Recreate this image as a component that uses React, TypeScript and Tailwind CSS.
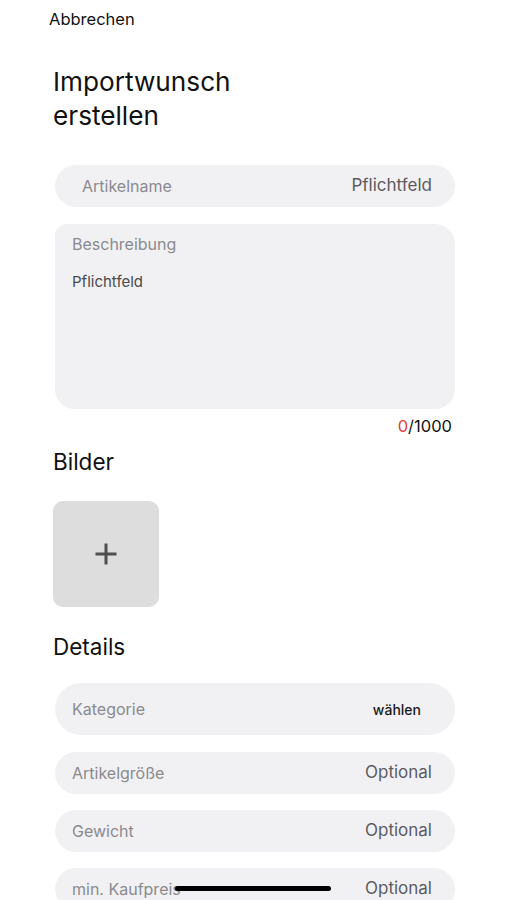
export default function App() {
  const rows = [
    { label: "Artikelgröße", value: "Optional" },
    { label: "Gewicht", value: "Optional" },
    { label: "min. Kaufpreis", value: "Optional" },
  ];

  return (
    <div
      className="relative h-[900px] w-[507px] overflow-hidden bg-white text-[#111]"
      style={{ fontFamily: "Inter, 'Noto Sans', sans-serif" }}
    >
      <div className="pl-[49px] pt-[9px] text-[16.5px] leading-5">Abbrechen</div>

      <div className="flex flex-col pl-[53px]">
        <h1 className="mt-[36px] text-[26.2px] leading-[34px]">
          Importwunsch
          <br />
          erstellen
        </h1>

        <div className="ml-[2px] mt-[32px] flex h-[42px] w-[400px] items-center justify-between rounded-full bg-[#f1f1f3] pl-[27px] pr-[23px]">
          <span className="text-[16px] text-[#8a8a8e]">Artikelname</span>
          <span className="text-[17px] text-[#5b5b5f]">Pflichtfeld</span>
        </div>

        <div className="ml-[2px] mt-[17px] h-[185px] w-[400px] rounded-[20px] rounded-tl-[12px] bg-[#f1f1f3] px-[17px] pt-[10px]">
          <div className="text-[16px] leading-5 text-[#8a8a8e]">Beschreibung</div>
          <div className="mt-[18px] text-[15px] leading-5 text-[#4a4a4c]">Pflichtfeld</div>
        </div>

        <div className="mt-[7px] w-[399px] text-right text-[16.5px] leading-5">
          <span className="text-[#e0403a]">0</span>/1000
        </div>

        <h2 className="mt-[12px] text-[22.5px] leading-[28px]">Bilder</h2>

        <button className="mt-[25px] flex h-[106px] w-[106px] items-center justify-center rounded-[10px] bg-[#dddddd]">
          <svg width="24" height="24" viewBox="0 0 24 24" fill="none" stroke="#4f4f4f" strokeWidth="3">
            <path d="M12 1.5v21M1.5 12h21" />
          </svg>
        </button>

        <h2 className="mt-[26px] text-[22.5px] leading-[28px]">Details</h2>

        <div className="ml-[2px] mt-[22px] flex h-[52px] w-[400px] items-center justify-between rounded-full bg-[#f1f1f3] pl-[17px] pr-[34px]">
          <span className="text-[16px] text-[#8a8a8e]">Kategorie</span>
          <span className="text-[14px] font-medium text-[#1a1a1a]">wählen</span>
        </div>

        <div className="ml-[2px] mt-[17px] flex w-[400px] flex-col gap-[16px]">
          {rows.map((r) => (
            <div
              key={r.label}
              className="flex h-[42px] items-center justify-between rounded-full bg-[#f1f1f3] pl-[17px] pr-[23px]"
            >
              <span className="text-[16px] text-[#8a8a8e]">{r.label}</span>
              <span className="text-[17px] text-[#5b5b5f]">{r.value}</span>
            </div>
          ))}
        </div>
      </div>

      <div className="absolute bottom-[9px] left-[175px] h-[5px] w-[156px] rounded-full bg-black" />
    </div>
  );
}
